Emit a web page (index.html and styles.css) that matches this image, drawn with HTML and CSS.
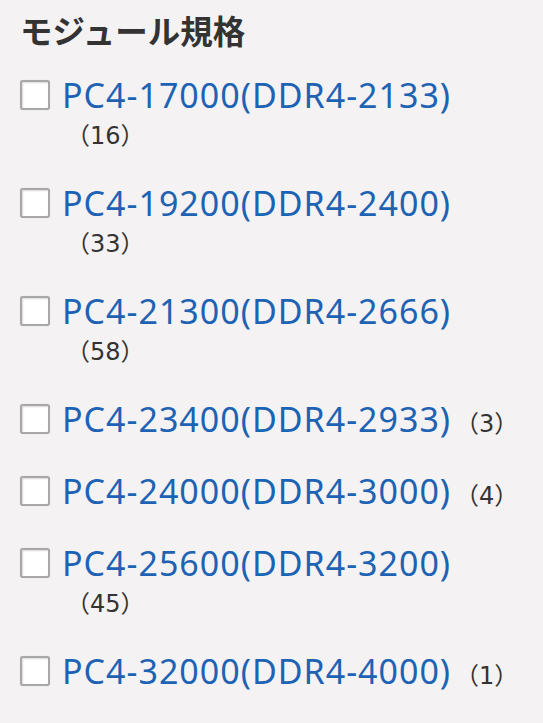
FILE: index.html
```html
<!DOCTYPE html>
<html lang="ja">
<head>
    <meta charset="UTF-8">
    <meta name="viewport" content="width=device-width, initial-scale=1.0">
    <title>モジュール規格</title>
    <link rel="stylesheet" href="styles.css">
</head>
<body>
    <div class="filter">
        <h3 class="filter-title">モジュール規格</h3>
        <ul class="filter-list">
            <li class="filter-item">
                <input type="checkbox" class="check" id="spec1">
                <label for="spec1"><a href="#">PC4-17000(DDR4-2133)</a><span class="count">（16）</span></label>
            </li>
            <li class="filter-item">
                <input type="checkbox" class="check" id="spec2">
                <label for="spec2"><a href="#">PC4-19200(DDR4-2400)</a><span class="count">（33）</span></label>
            </li>
            <li class="filter-item">
                <input type="checkbox" class="check" id="spec3">
                <label for="spec3"><a href="#">PC4-21300(DDR4-2666)</a><span class="count">（58）</span></label>
            </li>
            <li class="filter-item">
                <input type="checkbox" class="check" id="spec4">
                <label for="spec4"><a href="#">PC4-23400(DDR4-2933)</a><span class="count">（3）</span></label>
            </li>
            <li class="filter-item">
                <input type="checkbox" class="check" id="spec5">
                <label for="spec5"><a href="#">PC4-24000(DDR4-3000)</a><span class="count">（4）</span></label>
            </li>
            <li class="filter-item">
                <input type="checkbox" class="check" id="spec6">
                <label for="spec6"><a href="#">PC4-25600(DDR4-3200)</a><span class="count">（45）</span></label>
            </li>
            <li class="filter-item">
                <input type="checkbox" class="check" id="spec7">
                <label for="spec7"><a href="#">PC4-32000(DDR4-4000)</a><span class="count">（1）</span></label>
            </li>
        </ul>
    </div>
</body>
</html>
```

FILE: styles.css
```css
html {
    background-color: #f4f2f3;
}
body {
    margin: 0;
    padding: 8px 20px 0 20px;
    font-family: "Noto Sans", "Noto Sans CJK JP", sans-serif;
    color: #333;
}
.filter-title {
    margin: 0 0 24px;
    font-family: "Noto Sans CJK JP", sans-serif;
    font-size: 32.5px;
    line-height: 44px;
    font-weight: bold;
    color: #333;
}
.filter-list {
    list-style: none;
    margin: 0;
    padding: 0;
}
.filter-item {
    display: flex;
    align-items: flex-start;
    margin-bottom: 35px;
}
.check {
    appearance: none;
    -webkit-appearance: none;
    box-sizing: border-box;
    flex: none;
    width: 30px;
    height: 30px;
    margin: 4px 12px 0 0;
    background: #fff;
    border: 2px solid #a8a8a8;
    border-radius: 3px;
    box-shadow: inset 1px 1px 2px rgba(0, 0, 0, 0.15), 0 0 1px rgba(0, 0, 0, 0.2);
}
label {
    padding-top: 1px;
    font-size: 34px;
    line-height: 36px;
}
label a {
    color: #1e63b3;
    text-decoration: none;
    letter-spacing: 1px;
}
.count {
    padding-left: 4px;
    font-family: "DejaVu Sans", "Noto Sans CJK JP", sans-serif;
    font-size: 24px;
    line-height: 24px;
    color: #333;
}
```
